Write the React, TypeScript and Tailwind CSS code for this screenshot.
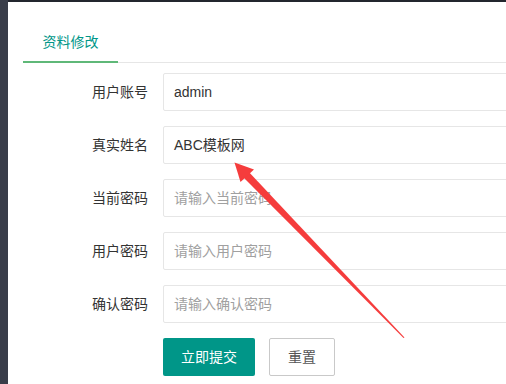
import React from "react";

const font = { fontFamily: '"Liberation Sans", "Noto Sans CJK SC", sans-serif' };

interface FieldProps {
  label: string;
  value?: string;
  placeholder?: string;
}

const Field: React.FC<FieldProps> = ({ label, value, placeholder }) => (
  <div className="flex items-center h-[38px] mb-[15px]">
    <label className="w-[140px] shrink-0 pr-[15px] text-right text-[14px] text-[#333]">
      {label}
    </label>
    <div className="w-[400px] shrink-0 h-[38px] border border-[#e6e6e6] rounded-[2px] bg-white flex items-center pl-[10px] text-[14px]">
      {value ? (
        <span className="text-[#333]">{value}</span>
      ) : (
        <span className="text-[#a0a0a0]">{placeholder}</span>
      )}
    </div>
  </div>
);

const App: React.FC = () => {
  return (
    <div
      className="relative w-[506px] h-[384px] overflow-hidden flex bg-white"
      style={font}
    >
      <div className="w-[8px] shrink-0 bg-[#393D49]" />
      <div className="flex-1 flex flex-col border-t-2 border-[#23262E]">
        <div className="pt-[20px] pl-[15px]">
          <div className="h-[41px] border-b border-[#e6e6e6] flex w-[600px]">
            <div className="relative w-[95px] h-[40px] flex items-center justify-center text-[14px] text-[#009688]">
              资料修改
              <div className="absolute left-0 right-0 top-[39px] h-[2px] bg-[#5FB878]" />
            </div>
          </div>
          <div className="mt-[10px]">
            <Field label="用户账号" value="admin" />
            <Field label="真实姓名" value="ABC模板网" />
            <Field label="当前密码" placeholder="请输入当前密码" />
            <Field label="用户密码" placeholder="请输入用户密码" />
            <Field label="确认密码" placeholder="请输入确认密码" />
            <div className="flex pl-[140px] gap-[14px]">
              <button className="h-[38px] px-[18px] bg-[#009688] text-white text-[14px] rounded-[2px]">
                立即提交
              </button>
              <button className="h-[38px] px-[18px] bg-white border border-[#C9C9C9] text-[#555] text-[14px] rounded-[2px]">
                重置
              </button>
            </div>
          </div>
        </div>
      </div>
      <svg
        className="absolute left-0 top-0 pointer-events-none"
        width="506"
        height="384"
        viewBox="0 0 506 384"
      >
        <polygon
          points="247,170 404.5,337.5 403.5,338 242,176"
          fill="#F53C3C"
        />
        <polygon points="234.5,162.5 254,169.5 240.5,182" fill="#F53C3C" />
      </svg>
    </div>
  );
};

export default App;
